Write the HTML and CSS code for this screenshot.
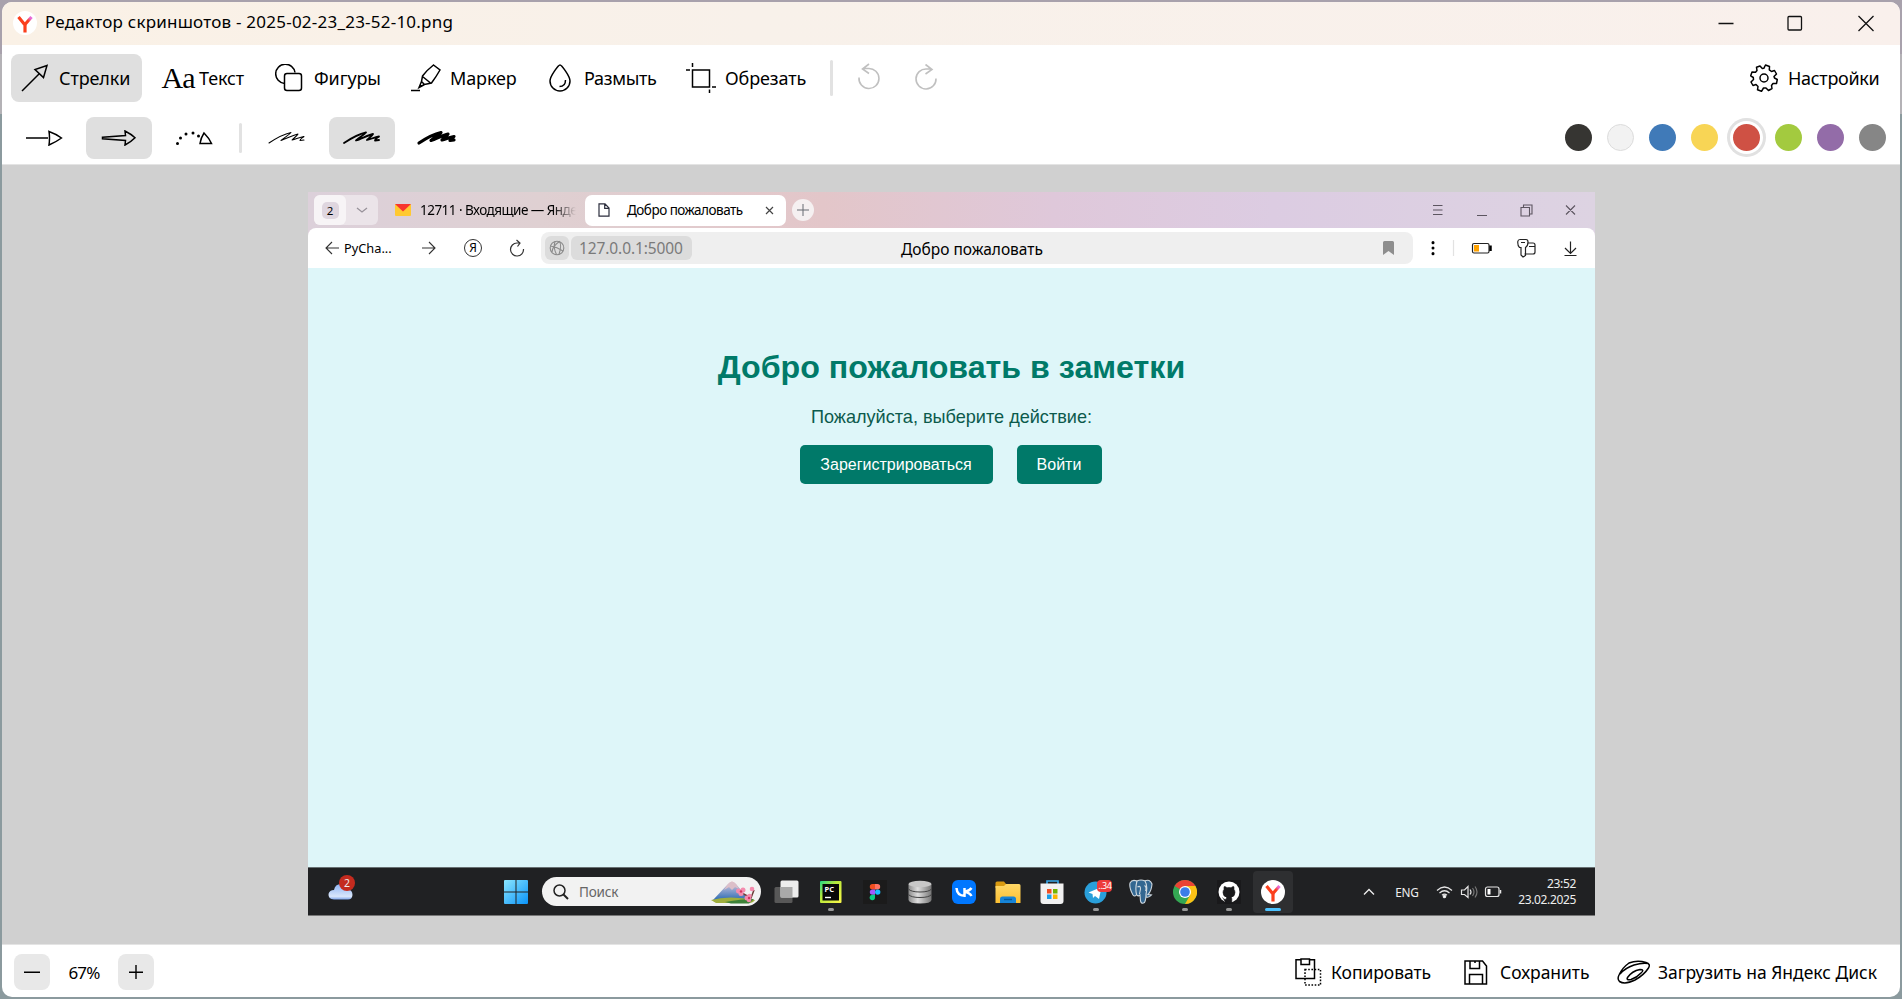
FILE: index.html
```html
<!DOCTYPE html>
<html lang="ru">
<head>
<meta charset="utf-8">
<title>Редактор скриншотов</title>
<link rel="stylesheet" href="styles.css">
</head>
<body>
<svg class="defs" width="0" height="0">
  <defs>
    <linearGradient id="gy" x1="0" x2="1" y1="1" y2="0"><stop offset=".5" stop-color="#fb3f1c"/><stop offset=".85" stop-color="#e86bd8"/></linearGradient>
    <linearGradient id="gwin" x1="0" x2="1" y1="0" y2="1"><stop offset="0" stop-color="#8be6ff"/><stop offset="1" stop-color="#0a93f8"/></linearGradient>
    <linearGradient id="gfold" x1="0" x2="0" y1="0" y2="1"><stop offset="0" stop-color="#ffd867"/><stop offset="1" stop-color="#fcbf32"/></linearGradient>
    <linearGradient id="gdb" x1="0" x2="1"><stop offset="0" stop-color="#8c8c8c"/><stop offset=".4" stop-color="#dedede"/><stop offset="1" stop-color="#777"/></linearGradient>
    <linearGradient id="gcloud" x1="0" x2="0" y1="0" y2="1"><stop offset="0" stop-color="#8eb4f4"/><stop offset=".8" stop-color="#d9e6fb"/><stop offset="1" stop-color="#7fa5ea"/></linearGradient>
    <linearGradient id="gpc" x1="0" x2="1" y1="0" y2="1"><stop offset="0" stop-color="#21d789"/><stop offset=".4" stop-color="#b6e83a"/><stop offset="1" stop-color="#fcf84a"/></linearGradient>
    <linearGradient id="gmt" x1="0" x2="0" y1="0" y2="1"><stop offset="0" stop-color="#f1c9cf"/><stop offset=".45" stop-color="#8fa3cf"/><stop offset="1" stop-color="#2f6db3"/></linearGradient>
    <symbol id="ylogo" viewBox="0 0 24 24"><circle cx="12" cy="12" r="12" fill="#fff"/><path d="M12 21.500V13.500M12 14L5.500 6" fill="none" stroke="#fb3f1c" stroke-width="3.200"/><path d="M11.500 14L18.500 6" fill="none" stroke="url(#gy)" stroke-width="3.200"/></symbol>
    <symbol id="scribble" viewBox="0 0 40 16"><path d="M2 13C8 9 17 4 24 2.500C22 5 18 7 14 10.500C19 9 26 5 31 4C30 6 27 8 25 10C29 9 33 7 37 6.500C35 8 33 9 33 10.500L37 10" fill="none" stroke="#000" stroke-linecap="round" stroke-linejoin="round"/></symbol>
  </defs>
</svg>
<div class="window">
  <header class="titlebar">
    <svg class="app-logo" width="24" height="24"><use href="#ylogo"/></svg>
    <span class="title">Редактор скриншотов - 2025-02-23_23-52-10.png</span>
    <svg class="win-controls" width="160" height="20" viewBox="0 0 160 20" fill="none" stroke="#111" stroke-width="1.300"><path d="M0.500 10.500h15"/><rect x="70" y="3.500" width="13.500" height="13.500" rx="1"/><path d="M140.500 3l15 15M155.500 3l-15 15"/></svg>
  </header>

  <div class="tools">
    <button class="tool t-arrow on"><svg width="28" height="28" viewBox="0 0 28 28" class="ln"><path d="M1 27L18 10M26 1.500L14 5.500L22.500 13.500Z"/></svg><span>Стрелки</span></button>
    <button class="tool t-text"><i class="aa">Aa</i><span>Текст</span></button>
    <button class="tool t-shape"><svg width="28" height="28" viewBox="0 0 28 28" class="ln"><path d="M9.500 19.500A9.700 9.700 0 1 1 20 8.500"/><rect x="9.500" y="9.500" width="17" height="17" rx="2.500"/></svg><span>Фигуры</span></button>
    <button class="tool t-marker"><svg width="32" height="28" viewBox="0 0 32 28" class="ln"><path d="M1 26.500h9M23.500 1L30 6Q26 13 21.500 19L14.500 20.500L11.500 17.500L12.500 12Q17 6 23.500 1ZM12.500 12.500L20.500 19M11.500 17.500L9 23.500L14.500 20.500M9 23.500l2-3"/></svg><span>Маркер</span></button>
    <button class="tool t-blur"><svg width="24" height="28" viewBox="0 0 24 28" class="ln"><path d="M12 1C13.500 1 22 12 22 17A10 10 0 0 1 2 17C2 12 10.500 1 12 1ZM17.500 16Q17.500 22.500 11.500 22.500"/></svg><span>Размыть</span></button>
    <button class="tool t-crop"><svg width="30" height="30" viewBox="0 0 30 30" class="ln"><path d="M6.500 7h17v17h-17zM0 7h4M6.500 0v4M26 24h4M23.500 26.500v4"/></svg><span>Обрезать</span></button>
    <b class="rule"></b>
    <svg class="undo" width="24" height="28" viewBox="0 0 24 28"><path d="M2 14.500A10 10 0 1 0 11.500 5.500H6M12 1L5.500 6L12 10.500"/></svg>
    <svg class="redo" width="24" height="28" viewBox="0 0 24 28"><path d="M22 15.500A10 10 0 1 1 12.500 6H17M11.500 1.500L18 6.500L11.500 11"/></svg>
    <button class="tool t-set"><svg width="28" height="28" viewBox="0 0 28 28" class="ln"><circle cx="14" cy="14" r="4"/><path d="M15.500 1L19.500 2.500L19.300 5.800L21.500 7.500L24.500 6.500L26.500 10L24 12.500L24.500 14L27.300 15.500L26.500 19.500L23 19.500L21.500 21.500L22 24.500L18.500 26.500L16 24L13.500 24L11.500 27.300L7.500 25.800L8 22.500L6 20.500L3 21.500L1 18L3.500 15.500L3.300 13.500L.7 11.800L2 8L5.500 8.300L7 6.500L6.500 3.300L10 2L12.300 4.500L13.800 4.300Z" stroke-linejoin="round"/></svg><span>Настройки</span></button>
  </div>

  <div class="options">
    <button class="opt"><svg width="38" height="16" viewBox="0 0 38 16" class="ln"><path d="M1 8h22M24 1.500Q31 4 36.500 8Q31 12 24 15Q25 8 24 1.500Z"/></svg></button>
    <button class="opt on"><svg width="36" height="16" viewBox="0 0 36 16" class="ln"><path d="M1.500 7.300L24.500 5.500L24 1Q30 4 34 7.800Q30 12 24 15L24.500 10.500L1.500 8.700Z"/></svg></button>
    <button class="opt"><svg width="38" height="16" viewBox="0 0 38 16" class="ln"><path d="M2.500 13.500v.1M5.500 8v.1M11 4v.1M18 3v.1M23.500 6v.1" stroke-width="3" stroke-linecap="round"/><path d="M29 3Q34 8 36.500 13.500H25Q26 7.500 29 3Z"/></svg></button>
    <b class="rule small"></b>
    <button class="opt"><svg width="40" height="16" stroke-width="1.050"><use href="#scribble"/></svg></button>
    <button class="opt on"><svg width="42" height="16" stroke-width="1.800"><use href="#scribble"/></svg></button>
    <button class="opt"><svg width="42" height="16" stroke-width="3.200"><use href="#scribble"/></svg></button>
    <div class="swatches"><i class="k"></i><i class="w"></i><i class="b"></i><i class="y"></i><i class="r"></i><i class="g"></i><i class="v"></i><i class="s"></i></div>
  </div>

  <main class="canvas">
    <div class="shot">
      <div class="tabs">
        <div class="group"><span><em>2</em></span><svg width="32" height="30" viewBox="0 0 32 30"><path d="M11 13l5 4 5-4" fill="none" stroke="#98929a" stroke-width="1.300"/></svg></div>
        <svg class="mail" width="16" height="12" viewBox="0 0 16 12"><rect width="16" height="12" rx="1" fill="#ffc931"/><path d="M0 0h16L8 7.500Z" fill="#f8352f"/></svg>
        <span class="tab-mail">12711 · Входящие — Янде</span>
        <div class="tab"><svg width="12" height="14" viewBox="0 0 12 14" fill="none" stroke="#2b2d3c" stroke-width="1.200"><path d="M1 .8h6l4 4.200v8.200H1zM6.700.8V5.300H11"/></svg><span>Добро пожаловать</span><svg class="x" width="9" height="9" viewBox="0 0 9 9"><path d="M1 1l7 7M8 1l-7 7" stroke="#444" stroke-width="1.200"/></svg></div>
        <svg class="plus" width="22" height="22" viewBox="0 0 22 22"><circle cx="11" cy="11" r="11" fill="#f5f0f1"/><path d="M5 11h12M11 5v12" stroke="#666b73"/></svg>
        <svg class="tab-ctl" width="144" height="16" viewBox="0 0 144 16" fill="none" stroke="#5c5560" stroke-width="1.100"><path d="M1 3.500h9.500M1 8h9.500M1 12.500h9.500M45 13.500h10M134 3.500l9 9M143 3.500l-9 9"/><path d="M89 5.500h8.500v8.500H89zM91.500 5V3h8.500v9h-2"/></svg>
      </div>
      <div class="nav">
        <svg class="back" width="14" height="14" viewBox="0 0 14 14" fill="none" stroke="#333" stroke-width="1.100"><path d="M14 7H1M7 1L1 7l6 6"/></svg>
        <span class="pych">PyCha...</span>
        <svg class="fwd" width="14" height="14" viewBox="0 0 14 14" fill="none" stroke="#333" stroke-width="1.100"><path d="M0 7h13M7 1l6 6-6 6"/></svg>
        <span class="ya">Я</span>
        <svg class="reload" width="16" height="18" viewBox="0 0 16 18" fill="none" stroke="#333" stroke-width="1.200"><path d="M14.500 10A6.500 6.500 0 1 1 8 4h3M7.500 1l3.500 3-2.500 3.500"/></svg>
        <div class="address">
          <span class="globe"><svg width="16" height="16" viewBox="0 0 16 16" fill="none" stroke="#8b8b8b" stroke-width="1.100"><circle cx="8" cy="8" r="6.800"/><path d="M3 12Q3.500 6 10.500 1.500Q13 5 10 14.500M1.500 6Q8 7 14 11M6 1.500Q4 8 7.500 14.500"/></svg></span>
          <span class="url">127.0.0.1:5000</span>
          <span class="ptitle">Добро пожаловать</span>
          <svg class="mark" width="11" height="14" viewBox="0 0 11 14"><path d="M0 1.500Q0 0 1.500 0h8Q11 0 11 1.500V14L5.500 10L0 14Z" fill="#8e8e8e"/></svg>
        </div>
        <svg class="nav-r" width="150" height="20" viewBox="0 0 150 20" fill="none" stroke="#222" stroke-width="1.200"><path d="M5 4.600v.1M5 10v.1M5 15.600v.1" stroke="#000" stroke-width="3" stroke-linecap="round"/><path d="M25.500 2v16" stroke="#e2e2e2"/><rect x="44.500" y="5.500" width="16.500" height="9.500" rx="1.500"/><path d="M62.500 7.500v5.500" stroke="#000" stroke-width="2.500"/><path d="M46 7h5v6.500h-5z" fill="#ffa200" stroke="none"/><path d="M100.500 5h4.500q2 0 2 2v7q0 2-2 2h-8.500M101 8.500h6M91.500 9.500Q89.500 8 89.800 3.500Q90 1.500 92 1.500H98Q100 1.500 100 4Q100 8 97.500 9.500V17.500L95 19L93 17V9.500ZM93 4.500h4"/><path d="M142.500 3.500v12M137 10l5.500 5.500L148 10M136.500 17.500h12"/></svg>
      </div>
      <div class="page">
        <h1>Добро пожаловать в заметки</h1>
        <p>Пожалуйста, выберите действие:</p>
        <div class="actions"><a class="reg">Зарегистрироваться</a><a class="login">Войти</a></div>
      </div>
      <div class="taskbar">
        <div class="weather"><svg width="28" height="24" viewBox="0 0 28 24"><path d="M6 23.500Q0 23 .5 18Q1.500 14 6 14Q7 8 13 8Q18 8 19.500 13Q24.500 14 24.500 19Q24 23.500 20 23.500Z" fill="url(#gcloud)"/></svg><em>2</em></div>
        <svg class="start" width="24" height="24" viewBox="0 0 24 24" fill="url(#gwin)"><path d="M1 0h10.500v11.500H0V1Q0 0 1 0ZM12.500 0H23q1 0 1 1v10.500H12.500ZM0 12.500h11.500V24H1q-1 0-1-1ZM12.500 12.500H24V23q0 1-1 1H12.500Z"/></svg>
        <div class="search"><svg width="16" height="16" viewBox="0 0 16 16" fill="none" stroke="#222" stroke-width="1.500"><circle cx="6.500" cy="6.500" r="5.500"/><path d="M10.500 10.500l4.500 4.500" stroke-width="2"/></svg><span>Поиск</span>
          <svg class="hill" width="46" height="24" viewBox="0 0 46 24"><path d="M2 20L17 4Q21-1 25 4L38 20Z" fill="url(#gmt)"/><path d="M17 4Q21-1 25 4L28 9L24 7L21 10L18 7L13 10Z" fill="#dcbfc9"/><path d="M0 20Q18 15 44 20Q42 23 38 23H5Z" fill="#9fae3d"/><path d="M14 22Q30 19 43 19L38 23.500H20Z" fill="#3c8138"/><path d="M29 12L40 18L43 10" stroke="#6b3a36" stroke-width="1.500" fill="none"/><g fill="#f48bae"><circle cx="27.500" cy="11" r="2.500"/><circle cx="32" cy="10" r="2.500"/><circle cx="30" cy="13.500" r="2.500"/><circle cx="36" cy="18" r="2.500"/><circle cx="38.500" cy="16" r="2.300"/><circle cx="38" cy="20" r="2.300"/><circle cx="41" cy="9" r="2.300"/></g><g fill="#d4345f"><circle cx="30" cy="11.500" r="1.200"/><circle cx="38" cy="18" r="1.200"/></g></svg></div>
        <div class="apps">
          <div class="app"><svg width="26" height="24" viewBox="0 0 26 24"><rect x=".5" y="7" width="18" height="16" rx="1.500" fill="#585858"/><rect x="6.500" y=".5" width="18" height="17" rx="1.500" fill="#ededed"/><path d="M6.500 7h12v10.500h-12z" fill="#a9a9a9"/></svg></div>
          <div class="app run"><svg width="22" height="22" viewBox="0 0 22 22"><rect width="21.500" height="22" rx="1" fill="url(#gpc)"/><rect x="2.500" y="3" width="16.500" height="16.500" fill="#070707"/><path d="M5 16.500h6" stroke="#fff" stroke-width="1.400"/><text x="4.500" y="11" class="pc">PC</text></svg></div>
          <div class="app"><svg width="24" height="24" viewBox="0 0 24 24"><rect width="24" height="24" fill="#1b1b1b"/><path d="M12 4H9.500a2.700 2.700 0 0 0 0 5.400H12Z" fill="#f24e1e"/><path d="M12 4h2.500a2.700 2.700 0 0 1 0 5.400H12Z" fill="#ff7262"/><path d="M12 9.400H9.500a2.700 2.700 0 0 0 0 5.400H12Z" fill="#a259ff"/><circle cx="14.700" cy="12.100" r="2.700" fill="#1abcfe"/><path d="M12 14.800H9.500A2.700 2.700 0 1 0 12 17.500Z" fill="#0acf83"/></svg></div>
          <div class="app"><svg width="24" height="24" viewBox="0 0 24 24"><path d="M.5 4v16Q1 23.500 12 23.500T23.500 20V4Z" fill="url(#gdb)"/><ellipse cx="12" cy="4" rx="11.500" ry="3.300" fill="#c8c8c8"/><path d="M.5 9Q3 12 12 12t11.500-3M.5 14.500Q3 17.500 12 17.500t11.500-3" fill="none" stroke="#444"/></svg></div>
          <div class="app"><svg width="24" height="24" viewBox="0 0 24 24"><rect width="24" height="24" rx="6" fill="#07f"/><path d="M4.500 8Q5 15.500 12.500 15.800V8M19.500 8Q17.500 11 12.500 12Q17.500 12.500 19.500 16" fill="none" stroke="#fff" stroke-width="2.500"/></svg></div>
          <div class="app"><svg width="26" height="24" viewBox="0 0 26 24"><path d="M.5 3q0-1.500 1.500-1.500h7l2 2.500v4H.5Z" fill="#d99a10"/><path d="M.5 6h8.500l2-2h13q1.500 0 1.500 1.500V23H.5Z" fill="url(#gfold)"/><path d="M5 23v-4q0-2.500 2.500-2.500h11Q21 16.500 21 19v4Z" fill="#1684d8"/><path d="M9 19.500h8" stroke="#075a9c" stroke-width="1.400"/></svg></div>
          <div class="app"><svg width="24" height="24" viewBox="0 0 24 24"><path d="M7 4V1h11v3" fill="none" stroke="#37a9ec" stroke-width="1.600"/><path d="M.5 3.500h23V21q0 3-3 3h-17q-3 0-3-3Z" fill="#f1f1f1"/><path d="M7 9h4.500v4.500H7z" fill="#f04e23"/><path d="M13 9h4.500v4.500H13z" fill="#6fb500"/><path d="M7 14.500h4.500V19H7z" fill="#1a9fe8"/><path d="M13 14.500h4.500V19H13z" fill="#fbb400"/></svg></div>
          <div class="app run tg"><svg width="24" height="24" viewBox="0 0 24 24"><circle cx="11.500" cy="12.500" r="11" fill="#2a9fda"/><path d="M4.500 12.500L17.500 7L15 19L11 16L9 18L8.500 14Z" fill="#fff"/></svg><em>..34</em></div>
          <div class="app"><svg width="24" height="25" viewBox="0 0 24 25" fill="#336791" stroke="#cfd8df" stroke-width="1.100"><path d="M8 2Q3 0 1 4Q0 9 4 16Q6 18.500 8 15Q7 8 8 2ZM15.500 2Q21-.5 23 5Q22.500 12 19 15.500L22.500 16Q20 19 17 18Z"/><path d="M8 2Q12 0 16 2Q19 7 17 15Q17 21 15.500 23.500Q12.500 25.500 11.500 22L11 16Q9 18 7.500 15.500Q6 9 8 2ZM8.500 8Q11.500 6 11.500 10L10.500 15M15.500 6.500Q18 8 16.500 12"/></svg></div>
          <div class="app run"><svg width="24" height="24" viewBox="0 0 24 24"><circle cx="12" cy="12" r="12" fill="#34a853"/><path d="M12 12L1.600 6A12 12 0 0 1 22.400 6Z" fill="#ea4335"/><path d="M12 6H22.400A12 12 0 0 1 12 24L17.200 15Z" fill="#fbc116"/><circle cx="12" cy="12" r="6" fill="#fff"/><circle cx="12" cy="12" r="4.800" fill="#3b7de8"/></svg></div>
          <div class="app run"><svg width="24" height="24" viewBox="0 0 24 24"><rect width="24" height="24" fill="#19191b"/><circle cx="12" cy="12" r="10.500" fill="#fff"/><path d="M9.200 24V19.500Q6.500 20 5.500 17.500M14.800 24v-5q0-1-.6-1.800Q18 16.500 18 12.500Q18 10.500 16.900 9.300Q17.300 7.800 16.700 6.500Q15.500 6.500 14 7.700Q12 7.200 10 7.700Q8.500 6.500 7.300 6.500Q6.700 7.800 7.100 9.300Q6 10.500 6 12.500Q6 16.500 9.800 17.200Q9.200 18 9.200 19V24Z" fill="#19191b" stroke="#19191b" stroke-width=".6"/></svg></div>
          <div class="app active"><svg width="24" height="24"><use href="#ylogo"/></svg></div>
        </div>
        <svg class="chev" width="12" height="8" viewBox="0 0 12 8"><path d="M1 6.500l5-5 5 5" fill="none" stroke="#eee" stroke-width="1.300"/></svg>
        <span class="lang">ENG</span>
        <svg class="tray" width="66" height="14" viewBox="0 0 66 14" fill="none" stroke="#e6e6e6" stroke-width="1.200"><path d="M1 5.500Q8.500-1.500 16 5.500M3.500 8Q8.500 3.500 13.500 8M6 10.300Q8.500 8 11 10.300"/><circle cx="8.500" cy="11.500" r="1.200" fill="#fff"/><path d="M25.500 5h3l3.500-3.500v11L28.500 9.500h-3zM34 4.500q2 2.500 0 5"/><path d="M36.500 3q3 4 0 8M39 1.500q4 5.500 0 11" stroke="#777"/><rect x="49.500" y="2" width="13.500" height="9.500" rx="2"/><path d="M51.500 4h3v5.500h-3z" fill="#fff" stroke="none"/><path d="M64.500 5v3.500" stroke-width="1.500"/></svg>
        <div class="clock"><span>23:52</span><span>23.02.2025</span></div>
      </div>
    </div>
  </main>

  <footer class="footer">
    <button class="zoom"><svg width="16" height="16"><path d="M0 8.200h16" stroke="#000" stroke-width="1.500"/></svg></button>
    <span class="pct">67%</span>
    <button class="zoom"><svg width="14" height="14"><path d="M0 7.200h14M7 0v14" stroke="#000" stroke-width="1.400"/></svg></button>
    <svg class="f-copy ln" width="27" height="28" viewBox="0 0 27 28"><path d="M6 1.700H1V20.500h18.500V1.700H14.500M6 1v5.500h8.500V1Z"/><path d="M10 11.500h15.500V27H10Z" stroke-dasharray="1.600 1.600"/></svg>
    <span class="l-copy">Копировать</span>
    <svg class="f-save ln" width="24" height="25" viewBox="0 0 24 25"><path d="M1 1h17.500l4 5V24H1ZM6 1v7.500h9.500V1M5.500 24v-9.500h13V24M11 1v2"/></svg>
    <span class="l-save">Сохранить</span>
    <svg class="f-disk ln" width="34" height="24" viewBox="0 0 34 24"><path d="M2 15Q5 8 12 3Q20 0 29 2.500Q34 4 31.500 8Q27 15 18 20Q8 25 2.500 21.500Q0 19 2 15ZM3 14Q8 8 17 5Q25 2.500 31.500 3.500M10.500 17.500Q15 11 23 9.500Q28 9.500 24 13Q20 17.500 14 19.500Q9 20.500 10.500 17.500Z"/></svg>
    <span class="l-disk">Загрузить на Яндекс Диск</span>
  </footer>
</div>
</body>
</html>
```

FILE: styles.css
```css
* { box-sizing: border-box; }
body {
  margin: 0; width: 1902px; height: 999px; padding: 2px; overflow: hidden;
  font-family: "Noto Sans", sans-serif; color: #000;
  background: linear-gradient(#a8a1ac 0 54px, #b4b2b6 54px 114px, #8b9a9e 114px);
}
svg { display: block; flex: none; }
.defs { position: absolute; }
button { border: 0; padding: 0; background: none; font: inherit; color: inherit; }
em, i { font-style: normal; }
span { white-space: nowrap; }
.ln { fill: none; stroke: #000; stroke-width: 1.5; }
.window { width: 1898px; height: 995px; border-radius: 10px; overflow: hidden; background: #fff; display: flex; flex-direction: column; }

.titlebar { height: 43px; display: flex; align-items: center; background: linear-gradient(90deg, #faf1e6, #f8f1ea 40%, #f9f0ec); padding: 0 22px 2px 11px; }
.title { margin-left: 8px; font-size: 17px; letter-spacing: .23px; line-height: 24px; margin-top: -1px; }
.win-controls { margin-left: auto; }

.tools { height: 66px; display: flex; align-items: center; padding-left: 9px; }
.tool { height: 48px; border-radius: 8px; display: flex; align-items: center; font-size: 18px; letter-spacing: -.12px; flex: none; }
.tool span { margin-top: -1px; }
.on { background: #dfdfdf; }
.t-arrow { width: 131px; padding-left: 10px; gap: 10px; }
.t-text { width: 115px; padding-left: 17px; }
.aa { width: 40px; font: 30px "Liberation Serif", serif; letter-spacing: -1px; text-indent: -2px; }
.t-shape { width: 136px; padding-left: 18px; gap: 11px; }
.t-marker { width: 138px; padding-left: 17px; gap: 8px; }
.t-blur { width: 155px; padding-left: 17px; gap: 12px; letter-spacing: -.35px; }
.t-crop { width: 144px; gap: 9px; }
.t-set { width: 131px; gap: 10px; margin-left: auto; margin-right: 19px; letter-spacing: -.3px; }
.rule { width: 3px; height: 36px; border-radius: 2px; background: #e2e2e2; flex: none; }
.undo, .redo { fill: none; stroke: #c0c0c0; stroke-width: 1.6; margin-left: 24px; margin-bottom: 3px; }
.redo { margin-left: 33px; }

.options { height: 54px; display: flex; align-items: center; padding-left: 9px; gap: 9px; border-bottom: 1px solid #e4e4e4; }
.opt { width: 66px; height: 42px; border-radius: 8px; display: flex; align-items: center; justify-content: center; }
.small { height: 30px; margin: 0 3px; }
.swatches { margin-left: auto; margin-right: 14px; display: flex; gap: 15px; }
.swatches i { width: 27px; height: 27px; border-radius: 50%; }
.k { background: #363532; } .w { background: #f2f2f2; border: 1px solid #dcdcdc; } .b { background: #407ab8; } .y { background: #f8d555; }
.r { background: #cf5144; box-shadow: 0 0 0 3px #fff, 0 0 0 6px #e1e1e1; } .g { background: #a3ca3f; } .v { background: #936ca8; } .s { background: #868686; }

.canvas { height: 780px; background: #d0d0d0; padding: 27px 0 0 306px; border-bottom: 1px solid #e4e4e4; }
.shot { width: 1287px; height: 724px; }
.tabs { height: 44px; margin-bottom: -8px; padding: 3px 0 11px 6px; display: flex; align-items: center; background: linear-gradient(90deg, #dcd0da, #dfd0d2 18%, #e3c6c9 40%, #dfc8da 58%, #dccce2 75%, #ddd3e2); font-size: 13.5px; }
.group { width: 64px; height: 30px; border-radius: 6px; background: #ebe4e9; display: flex; }
.group span { width: 32px; border-radius: 6px; background: #f7f4f6; display: flex; align-items: center; justify-content: center; }
.group em { width: 17px; height: 17px; border-radius: 5px; background: #dfd6df; font-size: 11.5px; line-height: 17px; text-align: center; }
.mail { margin-left: 17px; }
.tab-mail { margin-left: 9px; width: 156px; letter-spacing: -.53px; mask-image: linear-gradient(90deg, #000 85%, transparent); }
.tab { margin-left: 9px; width: 201px; height: 31px; border-radius: 7px; background: #fff; display: flex; align-items: center; padding-left: 13px; }
.tab span { margin-left: 17px; width: 138px; letter-spacing: -.5px; }
.plus { margin-left: 6px; }
.tab-ctl { margin-left: auto; margin-right: 19px; }
.nav { position: relative; height: 40px; border-radius: 8px 8px 0 0; background: #fff; display: flex; align-items: center; padding-left: 17px; }
.pych { margin-left: 5px; width: 58px; font-size: 12.8px; }
.fwd { margin-left: 20px; }
.ya { margin-left: 28px; width: 18px; height: 18px; border: 1px solid #333; border-radius: 50%; font-size: 12px; line-height: 16px; text-align: center; }
.reload { margin-left: 27px; }
.address { margin-left: 16px; width: 872px; height: 32px; border-radius: 8px; background: #efefef; display: flex; align-items: center; padding-left: 4px; }
.globe { width: 24px; height: 24px; border-radius: 6px; background: #dcdcdc; display: flex; align-items: center; justify-content: center; }
.url { margin-left: 2px; width: 121px; height: 24px; border-radius: 6px; background: #dcdcdc; color: #7a7a7a; font-size: 15.5px; line-height: 25px; padding-left: 8px; letter-spacing: -.1px; }
.ptitle { margin-left: 209px; width: 482px; font-size: 15.5px; margin-top: 1px; }
.nav-r { margin-left: 15px; }
.page { height: 599px; background: #def6f9; display: flex; flex-direction: column; align-items: center; font-family: "Liberation Sans", sans-serif; }
.page h1 { margin: 80px 0 0; font-size: 32.2px; line-height: 38px; color: #007a69; white-space: nowrap; }
.page p { margin: 20px 0 0; font-size: 18.1px; line-height: 22px; color: #0c5a4c; }
.actions { margin: 17px 2px 0 0; display: flex; gap: 24px; }
.actions a { height: 39px; border-radius: 5px; background: #007969; color: #fff; font-size: 16px; line-height: 40px; text-align: center; }
.reg { width: 193px; } .login { width: 85px; }

.taskbar { height: 49px; background: #202123; border-top: 1px solid #687173; border-bottom: 1px solid #777; display: flex; align-items: center; color: #eee; }
.weather { position: relative; width: 28px; height: 24px; margin: -8px 0 0 20px; }
.weather em { position: absolute; left: 11px; top: -1px; width: 16px; height: 16px; border-radius: 50%; background: #c42b1f; font-size: 10.5px; line-height: 16px; text-align: center; }
.start { margin-left: 148px; }
.search { margin-left: 14px; width: 219px; height: 29px; border-radius: 15px; background: #f2f2f2; display: flex; align-items: center; padding-left: 11px; color: #666; }
.search span { margin-left: 10px; width: 132px; font-size: 13.5px; letter-spacing: -.2px; }
.apps { margin-left: 6px; display: flex; gap: 4px; }
.app { position: relative; width: 40.2px; height: 42px; border-radius: 4px; display: flex; align-items: center; justify-content: center; }
.pc { font: bold 7.5px "Noto Sans", sans-serif; fill: #fff; }
.run::after, .active::after { content: ""; position: absolute; bottom: 2px; width: 6px; height: 3px; border-radius: 2px; background: #999; }
.active { background: #2e2f31; }
.active::after { width: 16px; background: #4cc2ff; }
.tg em { position: absolute; left: 21px; top: 9px; width: 15px; height: 12px; border-radius: 4px; background: #ed3b3b; color: #fff; font-size: 9px; line-height: 12px; text-align: center; letter-spacing: -.5px; }
.chev { margin-left: 70px; }
.lang { margin-left: 20px; width: 26px; font-size: 11.8px; letter-spacing: -.2px; }
.tray { margin-left: 15px; }
.clock { margin-left: auto; margin-right: 19px; display: flex; flex-direction: column; align-items: flex-end; font-size: 12px; line-height: 16px; letter-spacing: -.35px; }

.footer { height: 52px; display: flex; align-items: center; padding: 2px 0 0 12px; font-size: 17.5px; letter-spacing: -.05px; }
.zoom { width: 36px; height: 36px; border-radius: 8px; background: #e8e8e8; display: flex; align-items: center; justify-content: center; }
.pct { width: 68px; text-align: center; letter-spacing: -.8px; font-size: 17px; }
.f-copy { margin-left: 1141px; }
.l-copy { margin-left: 9px; width: 133px; }
.l-save { margin-left: 12px; width: 117px; }
.l-disk { margin-left: 7px; letter-spacing: 0; }
```
